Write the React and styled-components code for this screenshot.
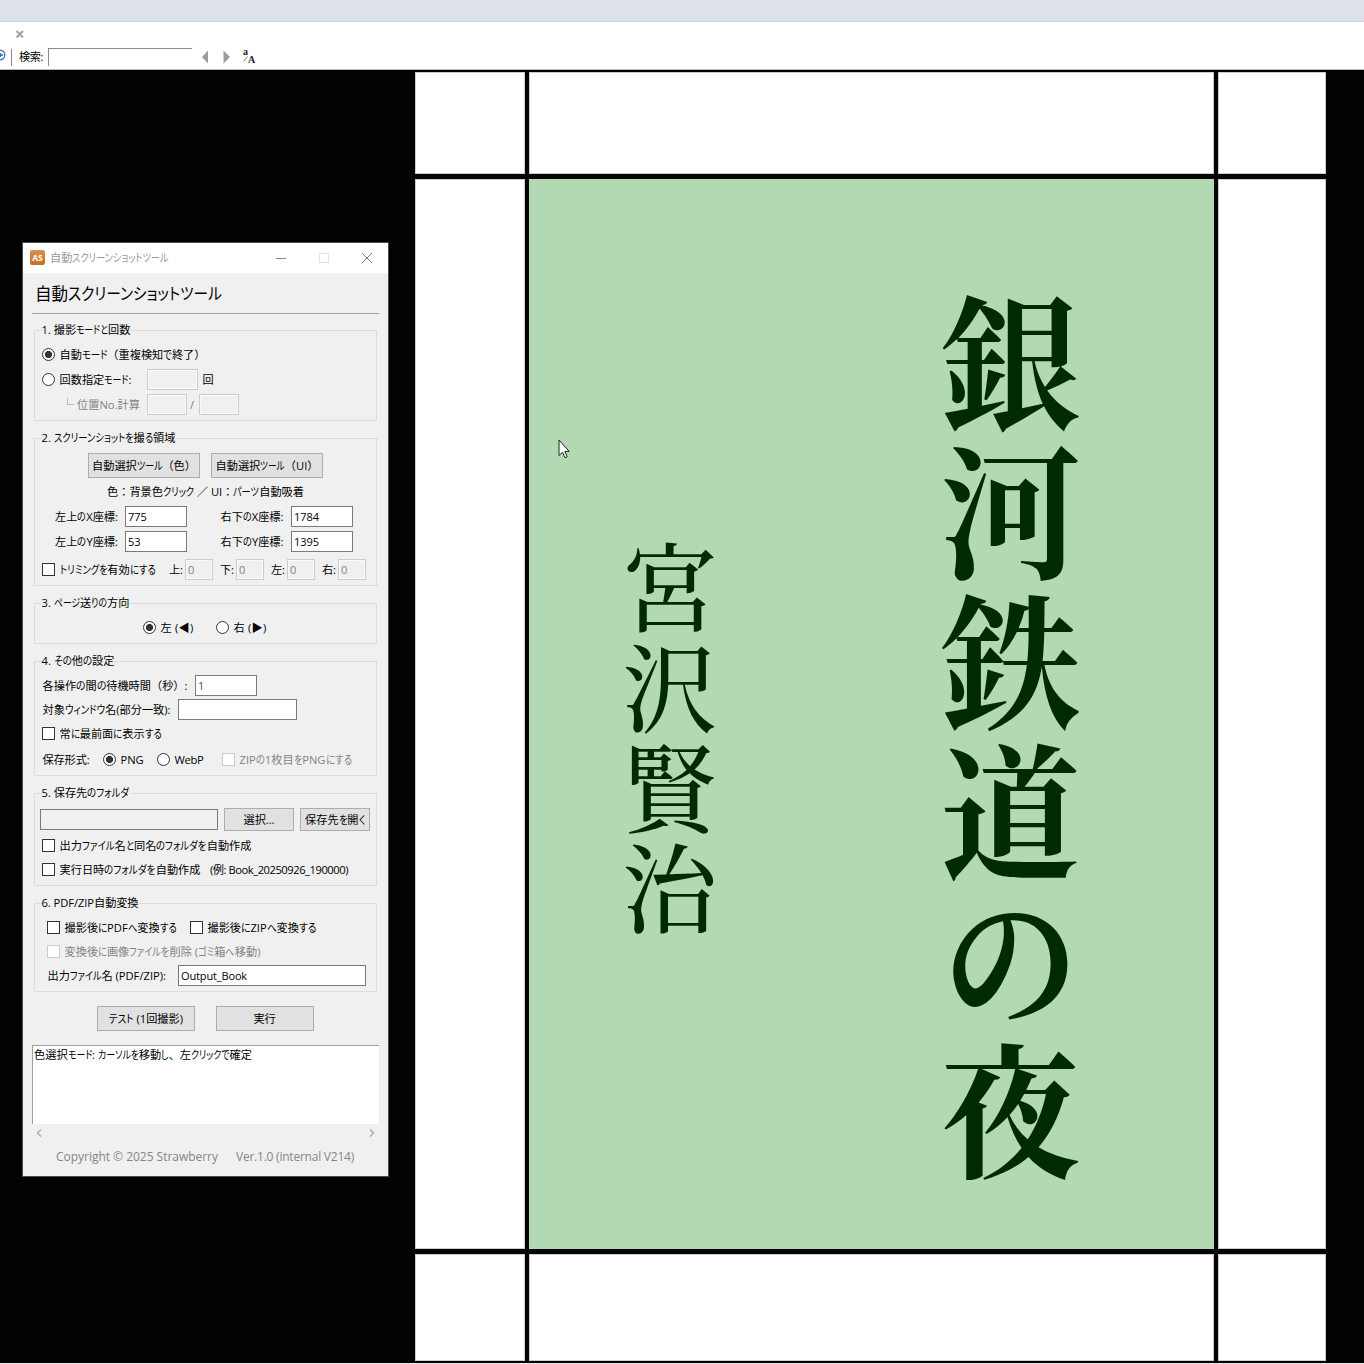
import React, { useLayoutEffect, useRef } from 'react';
import styled, { createGlobalStyle, css } from 'styled-components';

const KANA = /([\u3040-\u30ff]+)/;

// Kana are drawn condensed, the way the dialog font does it
const Label = ({ children, w, ...rest }) => {
  const ref = useRef(null);

  useLayoutEffect(() => {
    const el = ref.current;
    const kana = [...el.querySelectorAll('i')];
    const total = el.getBoundingClientRect().width;
    const widths = kana.map((k) => k.getBoundingClientRect().width);
    const kanaTotal = widths.reduce((a, b) => a + b, 0);
    if (kanaTotal > 0) {
      const scale = (w - (total - kanaTotal)) / kanaTotal;
      kana.forEach((k, i) => {
        k.style.width = `${widths[i] * scale}px`;
        k.style.transform = `scaleX(${scale})`;
      });
    } else {
      el.style.letterSpacing = `${(w - total) / children.length}px`;
    }
  }, [children, w]);

  return (
    <Text ref={ref} {...rest}>
      {children.split(KANA).map((part, i) => (KANA.test(part) ? <i key={i}>{part}</i> : part))}
    </Text>
  );
};

const Radio = ({ label, w, checked }) => (
  <Option>
    <RadioMark $checked={checked} />
    <Label w={w}>{label}</Label>
  </Option>
);

const Check = ({ label, w, disabled }) => (
  <Option>
    <CheckMark $disabled={disabled} />
    <Label w={w} $disabled={disabled}>{label}</Label>
  </Option>
);

const Group = ({ title, w, height, children }) => (
  <GroupBox $height={height}>
    <GroupTitle><Label w={w}>{title}</Label></GroupTitle>
    {children}
  </GroupBox>
);

const App = () => {
  return (
    <Screen>
      <GlobalStyle />
      <TitleStrip />
      <TabRow>
        <svg width="9" height="9" viewBox="0 0 9 9" stroke="#a3a3a3" strokeWidth="2">
          <path d="M1.5 1l6.5 6.5M8 1L1.5 7.5" />
        </svg>
      </TabRow>
      <Toolbar>
        <ZoomIcon width="6" height="14" viewBox="0 0 6 14" fill="none" stroke="#4377c4">
          <circle cx="0" cy="6" r="4.8" strokeWidth="1.4" />
          <path d="M0 6h3M0 4v4" stroke="#2c5fb0" strokeWidth="1.6" />
        </ZoomIcon>
        <Separator />
        <Label w={24}>検索:</Label>
        <SearchInput />
        <Arrows width="30" height="14" viewBox="0 0 30 14" fill="#9a9a9a">
          <path d="M7 0.5v13L1 7zM22.5 0.5v13L29 7z" />
        </Arrows>
        <CaseIcon>
          <span>a</span>
          <svg width="5" height="6" viewBox="0 0 5 6" stroke="#777"><path d="M0.5 5.5L4.5 0.5" /></svg>
          <span>A</span>
        </CaseIcon>
      </Toolbar>
      <Workspace>
        <Side>
          <Dialog>
            <TitleBar>
              <AppIcon>AS</AppIcon>
              <Label w={119} $color="#999">自動スクリーンショットツール</Label>
              <WindowButtons width="98" height="12" viewBox="0 0 98 12" fill="none">
                <path d="M1 6.5h10" stroke="#888" />
                <rect x="44.5" y="1.5" width="9" height="9" stroke="#e2e2e2" />
                <path d="M87 1l10 10M97 1L87 11" stroke="#777" />
              </WindowButtons>
            </TitleBar>
            <Content>
              <Heading><Label w={187}>自動スクリーンショットツール</Label></Heading>

              <Group title="1. 撮影モードと回数" w={89} height={91}>
                <Row $top={13} $left={8}><Radio checked label="自動モード（重複検知で終了）" w={146} /></Row>
                <Row $top={4} $left={8}>
                  <Radio label="回数指定モード:" w={72} />
                  <Input $width={51} $left={15.5} $disabled />
                  <Label w={11} $left={4.5}>回</Label>
                </Row>
                <Row $top={4} $left={32}>
                  <Elbow width="8" height="10" viewBox="0 0 8 10" fill="none">
                    <path d="M1.5 0v6.5H8" stroke="#c9b9a4" />
                  </Elbow>
                  <Label w={63} $left={3} $color="#838383">位置No.計算</Label>
                  <Input $width={40} $left={7} $disabled />
                  <Label w={5} $left={3} $color="#777">/</Label>
                  <Input $width={40} $left={3.5} $disabled />
                </Row>
              </Group>

              <Group title="2. スクリーンショットを撮る領域" w={134} height={148}>
                <Row $top={13} $left={54} $height={27}>
                  <Button $width={112}><Label w={104}>自動選択ツール（色）</Label></Button>
                  <Button $width={112} $left={11}><Label w={103}>自動選択ツール（UI）</Label></Button>
                </Row>
                <Row $left={73} $height={25}><Label w={197}>色：背景色クリック ／ UI：パーツ自動吸着</Label></Row>
                <Row $left={21} $height={25}>
                  <Label w={63}>左上のX座標:</Label>
                  <Input $width={62} $left={7}>775</Input>
                  <Label w={63} $left={33.5}>右下のX座標:</Label>
                  <Input $width={62} $left={7.5}>1784</Input>
                </Row>
                <Row $left={21} $height={25}>
                  <Label w={63}>左上のY座標:</Label>
                  <Input $width={62} $left={7}>53</Input>
                  <Label w={63} $left={33.5}>右下のY座標:</Label>
                  <Input $width={62} $left={7.5}>1395</Input>
                </Row>
                <Row $top={5} $left={8}>
                  <Check label="トリミングを有効にする" w={96} />
                  <Label w={14} $left={13.5}>上:</Label>
                  <Input $width={28} $left={2} $disabled>0</Input>
                  <Label w={14} $left={7}>下:</Label>
                  <Input $width={28} $left={2} $disabled>0</Input>
                  <Label w={14} $left={7}>左:</Label>
                  <Input $width={28} $left={2} $disabled>0</Input>
                  <Label w={14} $left={7}>右:</Label>
                  <Input $width={28} $left={2} $disabled>0</Input>
                </Row>
              </Group>

              <Group title="3. ページ送りの方向" w={88} height={41}>
                <Row $top={13} $left={109}>
                  <Radio checked label="左 (◀)" w={33} />
                  <Spacer $width={22.5} />
                  <Radio label="右 (▶)" w={33} />
                </Row>
              </Group>

              <Group title="4. その他の設定" w={73} height={115}>
                <Row $top={13} $left={8.5}>
                  <Label w={145}>各操作の間の待機時間（秒）:</Label>
                  <Input $width={62} $left={7.5}><Muted>1</Muted></Input>
                </Row>
                <Row $top={3} $left={8.5}>
                  <Label w={128}>対象ウィンドウ名(部分一致):</Label>
                  <Input $width={118.5} $left={7.5} />
                </Row>
                <Row $top={3} $left={8}><Check label="常に最前面に表示する" w={102} /></Row>
                <Row $top={5} $left={8.5}>
                  <Label w={47}>保存形式:</Label>
                  <Spacer $width={13.5} />
                  <Radio checked label="PNG" w={23} />
                  <Spacer $width={13.5} />
                  <Radio label="WebP" w={29} />
                  <Spacer $width={18.5} />
                  <Check disabled label="ZIPの1枚目をPNGにする" w={112} />
                </Row>
              </Group>

              <Group title="5. 保存先のフォルダ" w={88} height={93}>
                <Row $top={13} $left={6} $height={25}>
                  <Input $width={178} $readOnly />
                  <Button $width={70} $height={23} $left={6}><Label w={31}>選択...</Label></Button>
                  <Button $width={70} $height={23} $left={6}><Label w={60}>保存先を開く</Label></Button>
                </Row>
                <Row $top={3} $left={8}><Check label="出力ファイル名と同名のフォルダを自動作成" w={192} /></Row>
                <Row $top={3} $left={8}>
                  <Check label="実行日時のフォルダを自動作成" w={141} />
                  <Label w={138} $left={9.5}>(例: Book_20250926_190000)</Label>
                </Row>
              </Group>

              <Group title="6. PDF/ZIP自動変換" w={97} height={89}>
                <Row $top={13} $left={13}>
                  <Check label="撮影後にPDFへ変換する" w={112} />
                  <Spacer $width={13.5} />
                  <Check label="撮影後にZIPへ変換する" w={109} />
                </Row>
                <Row $top={3} $left={13}>
                  <Check disabled label="変換後に画像ファイルを削除 (ゴミ箱へ移動)" w={196} />
                </Row>
                <Row $top={3} $left={13.5}>
                  <Label w={118.5}>出力ファイル名 (PDF/ZIP):</Label>
                  <Input $width={188} $left={12}><Label w={66}>Output_Book</Label></Input>
                </Row>
              </Group>

              <Actions>
                <Button $width={98}><Label w={74}>テスト (1回撮影)</Label></Button>
                <Button $width={98}><Label w={22}>実行</Label></Button>
              </Actions>

              <Log><Label w={218}>色選択モード: カーソルを移動し、左クリックで確定</Label></Log>
              <ScrollBar>
                <svg width="6" height="8" viewBox="0 0 6 8"><path d="M5 0.5L1.5 4L5 7.5" /></svg>
                <svg width="6" height="8" viewBox="0 0 6 8"><path d="M1 0.5L4.5 4L1 7.5" /></svg>
              </ScrollBar>
              <Footer>
                <Label w={162} $color="#868686">Copyright © 2025 Strawberry</Label>
                <Label w={118} $color="#868686">Ver.1.0 (internal V214)</Label>
              </Footer>
            </Content>
          </Dialog>
        </Side>
        <Sheet>
          <Cell /><Cell /><Cell />
          <Cell />
          <Cover>
            <Author>宮沢賢治</Author>
            <BookTitle>銀河鉄道の夜</BookTitle>
            <Cursor width="12" height="20" viewBox="0 0 12 20">
              <path d="M1 1v15.5l3.5-3.2 2.4 5.4 2.3-1-2.4-5.3h4.4z" fill="#fff" stroke="#222" />
            </Cursor>
          </Cover>
          <Cell />
          <Cell /><Cell /><Cell />
        </Sheet>
      </Workspace>
    </Screen>
  );
};

export default App;

const GlobalStyle = createGlobalStyle`
  * {
    box-sizing: border-box;
  }

  body {
    margin: 0;
    background: #000;
    font-family: 'Open Sans', 'Noto Sans CJK JP', sans-serif;
    font-size: 11.2px;
    color: #000;
    overflow: hidden;
  }

  svg {
    display: block;
    flex: none;
  }
`;

const Screen = styled.div`
  display: flex;
  flex-direction: column;
  width: 1364px;
  height: 1364px;
  overflow: hidden;
  background: #020202;
`;

const Text = styled.span`
  display: inline-block;
  flex: none;
  white-space: pre;
  line-height: 20px;
  margin-left: ${(props) => props.$left || 0}px;
  color: ${(props) => (props.$disabled ? '#838383' : props.$color || 'inherit')};

  i {
    display: inline-block;
    font-style: normal;
    font-feature-settings: 'palt';
    transform-origin: 0 50%;
  }
`;

const TitleStrip = styled.div`
  flex: none;
  height: 22px;
  background: #dde1ea;
  border-bottom: 1px solid #d0d3d9;
`;

const TabRow = styled.div`
  flex: none;
  height: 24px;
  padding: 8px 0 0 15px;
  background: #fff;
`;

const Toolbar = styled.div`
  flex: none;
  display: flex;
  align-items: center;
  height: 24px;
  padding-bottom: 1px;
  background: #fff;
  border-bottom: 1px solid #b9b9b9;
`;

const ZoomIcon = styled.svg`
  margin-top: -2px;
`;

const Separator = styled.div`
  width: 1px;
  height: 17px;
  margin: 0 7px 0 5px;
  background: #8a8a8a;
`;

const SearchInput = styled.div`
  width: 144px;
  height: 18px;
  margin: 0 9px 0 5px;
  border-top: 1px solid #8b8b8b;
  border-left: 1px solid #8b8b8b;
`;

const Arrows = styled.svg`
  margin-right: 12px;
`;

const CaseIcon = styled.div`
  display: flex;
  font: bold 10px/10px 'Liberation Serif', serif;
  color: #222;

  span:first-child {
    margin-top: -3px;
  }

  svg {
    margin: 6px 0 0 -5px;
  }

  span:last-child {
    margin-top: 5px;
  }
`;

const Workspace = styled.div`
  flex: 1;
  display: flex;
  border-bottom: 1px solid #e8e8e8;
`;

const Side = styled.div`
  width: 415px;
  padding: 172px 0 0 22px;
`;

const Dialog = styled.div`
  width: 367px;
  height: 935px;
  border: 1px solid #4b4b4b;
  background: #f0f0f0;
`;

const TitleBar = styled.div`
  display: flex;
  align-items: center;
  height: 30px;
  padding: 0 15px 1px 7px;
  background: #fff;
`;

const AppIcon = styled.div`
  width: 15px;
  height: 15px;
  margin-right: 5px;
  border-radius: 2px;
  background: linear-gradient(#d99152, #c86f1c);
  color: #fff;
  font-size: 8.5px;
  font-weight: bold;
  line-height: 15px;
  text-align: center;
`;

const WindowButtons = styled.svg`
  margin-left: auto;
`;

const Content = styled.div`
  display: flex;
  flex-direction: column;
  padding: 0 9px;
`;

const Heading = styled.div`
  height: 41px;
  padding: 9px 0 0 3px;
  margin-bottom: 16px;
  border-bottom: 1px solid #a0a0a0;
  font-size: 16.6px;
`;

const GroupBox = styled.div`
  flex: none;
  display: flex;
  flex-direction: column;
  height: ${(props) => props.$height}px;
  margin: 0 2px 17px;
  border: 1px solid #dcdcdc;
`;

const GroupTitle = styled.div`
  align-self: flex-start;
  height: 20px;
  margin: -11px 0 -9px 6.5px;
  background: #f0f0f0;
`;

const Row = styled.div`
  flex: none;
  display: flex;
  align-items: center;
  height: ${(props) => props.$height || 21}px;
  margin-top: ${(props) => props.$top || 0}px;
  padding-left: ${(props) => (props.$left || 0) - 1}px;
`;

const Option = styled.div`
  display: flex;
  align-items: center;
  gap: 4.5px;
`;

const RadioMark = styled.span`
  width: 13px;
  height: 13px;
  border: 1px solid #333;
  border-radius: 50%;
  background: ${(props) => (props.$checked ? 'radial-gradient(circle, #333 3.2px, #fff 3.9px)' : '#fff')};
`;

const CheckMark = styled.span`
  width: 13px;
  height: 13px;
  border: 1px solid ${(props) => (props.$disabled ? '#ccc' : '#333')};
  background: #fff;
`;

const Input = styled.div`
  flex: none;
  display: flex;
  align-items: center;
  width: ${(props) => props.$width}px;
  height: 21px;
  margin-left: ${(props) => props.$left || 0}px;
  padding-left: 2px;
  border: 1px solid #7a7a7a;
  background: #fff;
  font-size: 11px;
  ${(props) => props.$readOnly && css`
    background: #f0f0f0;
  `}
  ${(props) => props.$disabled && css`
    border-color: #ccc;
    background: #f0f0f0;
    box-shadow: inset 0 0 0 1px #fafafa;
    color: #838383;
  `}
`;

const Muted = styled.span`
  color: #555;
`;

const Spacer = styled.div`
  width: ${(props) => props.$width}px;
`;

const Elbow = styled.svg`
  margin-top: -3px;
`;

const Button = styled.div`
  flex: none;
  display: flex;
  align-items: center;
  justify-content: center;
  width: ${(props) => props.$width}px;
  height: ${(props) => props.$height || 25}px;
  margin-left: ${(props) => props.$left || 0}px;
  border: 1px solid #adadad;
  background: #e1e1e1;
`;

const Actions = styled.div`
  display: flex;
  gap: 20.5px;
  margin: -3px 0 14px 65px;
`;

const Log = styled.div`
  height: 79px;
  padding-left: 1px;
  border-top: 1px solid #a0a0a0;
  border-left: 1px solid #a0a0a0;
  background: #fff;

  span {
    line-height: 18px;
  }
`;

const ScrollBar = styled.div`
  display: flex;
  justify-content: space-between;
  padding: 5px 4px 0;

  path {
    fill: none;
    stroke: #b0b0b0;
    stroke-width: 1.6;
  }
`;

const Footer = styled.div`
  display: flex;
  gap: 18px;
  padding: 10px 0 0 24px;
  font-size: 12px;
`;

const Sheet = styled.div`
  display: grid;
  grid-template-columns: 110px 685px 108px;
  grid-template-rows: 102px 1070px 107px;
  column-gap: 4px;
  row-gap: 5px;
  align-self: flex-start;
  margin-top: 2px;
  background: #050505;
`;

const Cell = styled.div`
  background: #fff;
  box-shadow: inset 0 0 0 1px #ccc;
`;

const Cover = styled.div`
  position: relative;
  background: #b3d9b3;
  color: #002b00;
  font-family: 'Noto Serif CJK JP', 'Noto Sans CJK JP', serif;
  writing-mode: vertical-rl;
  display: flex;
  flex-direction: column-reverse;
  justify-content: space-between;
  padding: 112px 129px 0 93px;
`;

const BookTitle = styled.div`
  font-size: 145px;
  line-height: 145px;
  letter-spacing: 4.7px;
  font-weight: 700;
  transform: scaleX(0.965);
  transform-origin: 0 0;
`;

const Author = styled.div`
  margin-top: 248px;
  font-size: 97px;
  line-height: 97px;
  letter-spacing: 3.3px;
  font-weight: 500;
  transform: scaleX(0.975);
  transform-origin: 0 0;
`;

const Cursor = styled.svg`
  position: absolute;
  left: 29px;
  top: 260px;
`;
